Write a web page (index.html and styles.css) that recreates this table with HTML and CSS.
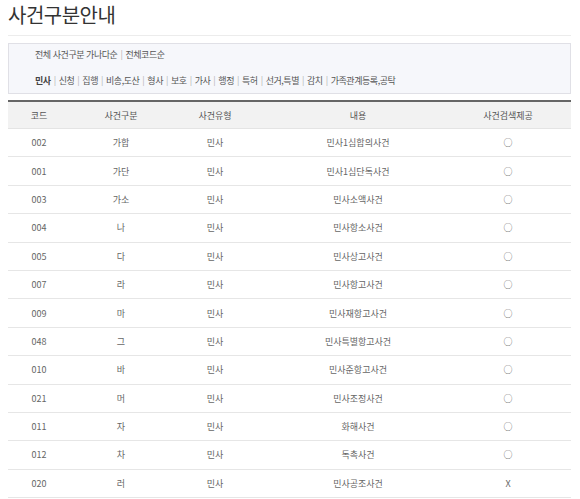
FILE: index.html
```html
<!DOCTYPE html>
<html lang="ko">
<head>
<meta charset="utf-8">
<link rel="stylesheet" href="styles.css">
</head>
<body>
<div class="page">
  <h1 class="title">사건구분안내</h1>
  <div class="filter">
    <p class="line1"><span>전체 사건구분 가나다순</span><span class="sep">|</span><span>전체코드순</span></p>
    <p class="line2"><b>민사</b><span class="sep">|</span>신청<span class="sep">|</span>집행<span class="sep">|</span>비송,도산<span class="sep">|</span>형사<span class="sep">|</span>보호<span class="sep">|</span>가사<span class="sep">|</span>행정<span class="sep">|</span>특허<span class="sep">|</span>선거,특별<span class="sep">|</span>감치<span class="sep">|</span>가족관계등록,공탁</p>
  </div>
  <table class="list">
    <colgroup>
      <col class="c1"><col class="c2"><col class="c3"><col class="c4"><col class="c5">
    </colgroup>
    <thead>
      <tr><th>코드</th><th>사건구분</th><th>사건유형</th><th>내용</th><th>사건검색제공</th></tr>
    </thead>
    <tbody>
      <tr><td>002</td><td>가합</td><td>민사</td><td>민사1심합의사건</td><td>○</td></tr>
      <tr><td>001</td><td>가단</td><td>민사</td><td>민사1심단독사건</td><td>○</td></tr>
      <tr><td>003</td><td>가소</td><td>민사</td><td>민사소액사건</td><td>○</td></tr>
      <tr><td>004</td><td>나</td><td>민사</td><td>민사항소사건</td><td>○</td></tr>
      <tr><td>005</td><td>다</td><td>민사</td><td>민사상고사건</td><td>○</td></tr>
      <tr><td>007</td><td>라</td><td>민사</td><td>민사항고사건</td><td>○</td></tr>
      <tr><td>009</td><td>마</td><td>민사</td><td>민사재항고사건</td><td>○</td></tr>
      <tr><td>048</td><td>그</td><td>민사</td><td>민사특별항고사건</td><td>○</td></tr>
      <tr><td>010</td><td>바</td><td>민사</td><td>민사준항고사건</td><td>○</td></tr>
      <tr><td>021</td><td>머</td><td>민사</td><td>민사조정사건</td><td>○</td></tr>
      <tr><td>011</td><td>자</td><td>민사</td><td>화해사건</td><td>○</td></tr>
      <tr><td>012</td><td>차</td><td>민사</td><td>독촉사건</td><td>○</td></tr>
      <tr><td>020</td><td>러</td><td>민사</td><td>민사공조사건</td><td>X</td></tr>
    </tbody>
  </table>
</div>
</body>
</html>
```
FILE: styles.css
```css
html, body {
  margin: 0;
  padding: 0;
  background: #fff;
}
body {
  font-family: "Noto Sans CJK KR", "Noto Sans", sans-serif;
  color: #666;
  font-size: 11px;
}
.page {
  padding: 0 9px 0 8px;
}
.title {
  margin: 0;
  padding: 1px 0 6px 0;
  font-size: 20px;
  font-weight: 400;
  color: #333;
  line-height: 28px;
  letter-spacing: -0.5px;
  border-bottom: 1px solid #ececec;
}
.filter {
  margin-top: 7px;
  background: #f6f7fb;
  border: 1px solid #e0e0e6;
  padding: 0 0 1px 26px;
}
.filter p {
  margin: 0;
  line-height: 22px;
  color: #555;
  font-size: 9px;
  letter-spacing: -0.45px;
}
.filter .line2 {
  margin-top: 4px;
}
.filter b {
  font-weight: 700;
  color: #444;
}
.sep {
  color: #b5b5b5;
  margin: 0 3px;
}
.list {
  width: 100%;
  margin-top: 6px;
  border-collapse: collapse;
  border-top: 2px solid #666;
}
.c1 { width: 62px; }
.c2 { width: 102px; }
.c3 { width: 86px; }
.c4 { width: 200px; }
.c5 { width: auto; }
.list th {
  background: #f2f2f2;
  font-weight: 400;
  color: #555;
  height: 26px;
  padding: 0;
  font-size: 9px;
  border-bottom: 1px solid #e4e4e4;
}
.list td {
  height: 27.4px;
  padding: 0;
  text-align: center;
  font-size: 9px;
  color: #666;
  border-bottom: 1px solid #e6e6e6;
}
.list th:last-child, .list td:last-child {
  padding-right: 13px;
}
```
